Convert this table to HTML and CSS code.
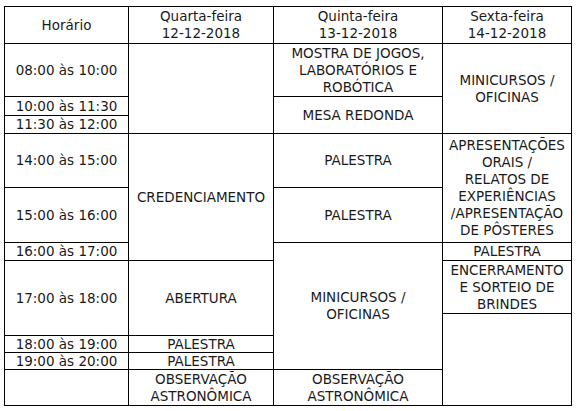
FILE: index.html
```html
<!DOCTYPE html>
<html lang="pt">
<head>
<meta charset="utf-8">
<title>Programação</title>
<link rel="stylesheet" href="styles.css">
</head>
<body>
<div class="schedule">
  <div class="cell h-hora">Horário</div>
  <div class="cell h-qua">Quarta-feira<br>12-12-2018</div>
  <div class="cell h-qui">Quinta-feira<br>13-12-2018</div>
  <div class="cell h-sex">Sexta-feira<br>14-12-2018</div>

  <div class="cell t1">08:00 às 10:00</div>
  <div class="cell t2">10:00 às 11:30</div>
  <div class="cell t3">11:30 às 12:00</div>
  <div class="cell t4">14:00 às 15:00</div>
  <div class="cell t5">15:00 às 16:00</div>
  <div class="cell t6">16:00 às 17:00</div>
  <div class="cell t7">17:00 às 18:00</div>
  <div class="cell t8">18:00 às 19:00</div>
  <div class="cell t9">19:00 às 20:00</div>
  <div class="cell t10"></div>

  <div class="cell qa1"></div>
  <div class="cell qa2">CREDENCIAMENTO</div>
  <div class="cell qa3">ABERTURA</div>
  <div class="cell qa4">PALESTRA</div>
  <div class="cell qa5">PALESTRA</div>
  <div class="cell qa6">OBSERVAÇÃO<br>ASTRONÔMICA</div>

  <div class="cell qi1">MOSTRA DE JOGOS,<br>LABORATÓRIOS E<br>ROBÓTICA</div>
  <div class="cell qi2">MESA REDONDA</div>
  <div class="cell qi3">PALESTRA</div>
  <div class="cell qi4">PALESTRA</div>
  <div class="cell qi5">MINICURSOS /<br>OFICINAS</div>
  <div class="cell qi6">OBSERVAÇÃO<br>ASTRONÔMICA</div>

  <div class="cell sx1">MINICURSOS /<br>OFICINAS</div>
  <div class="cell sx2">APRESENTAÇÕES<br>ORAIS /<br>RELATOS DE<br>EXPERIÊNCIAS<br>/APRESENTAÇÃO<br>DE PÔSTERES</div>
  <div class="cell sx3">PALESTRA</div>
  <div class="cell sx4">ENCERRAMENTO<br>E SORTEIO DE<br>BRINDES</div>
  <div class="cell sx5"></div>
</div>
</body>
</html>
```

FILE: styles.css
```css
html, body {
  background: #ffffff;
}

body {
  margin: 6px 0 0 4px;
  font-family: "DejaVu Sans", "Liberation Sans", sans-serif;
  font-size: 13.5px;
  line-height: 17px;
  color: #1a1a1a;
}

.schedule {
  display: grid;
  width: 566px;
  padding: 1px;
  gap: 1px;
  background: #000000;
  grid-template-columns: 123px 144px 168px 128px;
  grid-template-rows: 36px 52px 18px 17px 53px 54px 17px 52px 21px 16px 16px 35px;
}

.cell {
  background: #ffffff;
  display: flex;
  align-items: center;
  justify-content: center;
  text-align: center;
  overflow: visible;
  white-space: nowrap;
}

/* header */
.h-hora { grid-column: 1; grid-row: 1; }
.h-qua  { grid-column: 2; grid-row: 1; }
.h-qui  { grid-column: 3; grid-row: 1; }
.h-sex  { grid-column: 4; grid-row: 1; }

/* horário column */
.t1  { grid-column: 1; grid-row: 2; }
.t2  { grid-column: 1; grid-row: 3; }
.t3  { grid-column: 1; grid-row: 4; }
.t4  { grid-column: 1; grid-row: 5; }
.t5  { grid-column: 1; grid-row: 6; }
.t6  { grid-column: 1; grid-row: 7; }
.t7  { grid-column: 1; grid-row: 8 / 10; }
.t8  { grid-column: 1; grid-row: 10; }
.t9  { grid-column: 1; grid-row: 11; }
.t10 { grid-column: 1; grid-row: 12; }

/* quarta-feira */
.qa1 { grid-column: 2; grid-row: 2 / 5; }
.qa2 { grid-column: 2; grid-row: 5 / 8; }
.qa3 { grid-column: 2; grid-row: 8 / 10; }
.qa4 { grid-column: 2; grid-row: 10; }
.qa5 { grid-column: 2; grid-row: 11; }
.qa6 { grid-column: 2; grid-row: 12; }

/* quinta-feira */
.qi1 { grid-column: 3; grid-row: 2; }
.qi2 { grid-column: 3; grid-row: 3 / 5; }
.qi3 { grid-column: 3; grid-row: 5; }
.qi4 { grid-column: 3; grid-row: 6; }
.qi5 { grid-column: 3; grid-row: 7 / 12; }
.qi6 { grid-column: 3; grid-row: 12; }

/* sexta-feira */
.sx1 { grid-column: 4; grid-row: 2 / 5; }
.sx2 { grid-column: 4; grid-row: 5 / 7; }
.sx3 { grid-column: 4; grid-row: 7; }
.sx4 { grid-column: 4; grid-row: 8; }
.sx5 { grid-column: 4; grid-row: 9 / 13; }
```
